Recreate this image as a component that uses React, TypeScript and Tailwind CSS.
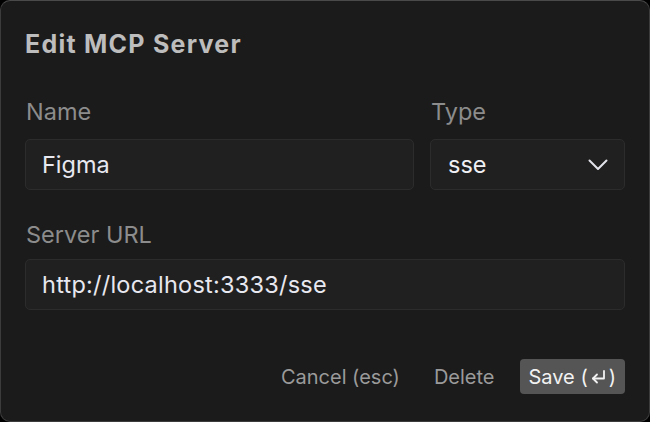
import { useState } from "react";

const Chevron = () => (
  <svg width="20" height="12" viewBox="0 0 20 12" fill="none" className="text-[#e2e2ea]">
    <path d="M1.5 1.5 L10 10 L18.5 1.5" stroke="currentColor" strokeWidth="2" strokeLinecap="round" strokeLinejoin="round" />
  </svg>
);

const ReturnKey = () => (
  <svg width="17" height="16" viewBox="0 0 17 16" fill="none" className="mx-[2px] inline-block">
    <path d="M14 2 V9.5 H3" stroke="currentColor" strokeWidth="1.8" strokeLinecap="round" strokeLinejoin="round" />
    <path d="M7 5.5 L3 9.5 L7 13.5" stroke="currentColor" strokeWidth="1.8" strokeLinecap="round" strokeLinejoin="round" />
  </svg>
);

const inputCls =
  "h-[51px] rounded-[5px] border border-[#2c2c2c] bg-[#202020] px-[16px] text-[23.5px] text-[#e8e8f0] outline-none";

const App = () => {
  const [name, setName] = useState("Figma");
  const [url, setUrl] = useState("http://localhost:3333/sse");

  return (
    <div className="h-[422px] w-[650px] bg-black font-['Inter',sans-serif]">
      <div className="flex h-full w-full flex-col rounded-[10px] border border-[#3c3c3c] border-t-[#4a4a4a] bg-[#1b1b1b] px-[24px] pt-[28px]">
        <h1 className="text-[25px] leading-[30px] font-bold tracking-[0.05em] text-[#bdbdbd]">Edit MCP Server</h1>

        <div className="mt-[39px] flex gap-4">
          <div className="flex min-w-0 flex-1 flex-col">
            <label className="pl-px text-[23.5px] leading-[28px] text-[#8c8c8c]">Name</label>
            <input value={name} onChange={(e) => setName(e.target.value)} className={`mt-[13px] w-full ${inputCls}`} />
          </div>
          <div className="flex w-[195px] shrink-0 flex-col">
            <label className="pl-px text-[23.5px] leading-[28px] text-[#8c8c8c]">Type</label>
            <div className="mt-[13px] flex h-[51px] items-center justify-between rounded-[5px] border border-[#2c2c2c] bg-[#202020] pr-[16px] pl-[17px]">
              <span className="text-[23.5px] text-[#f0f0f4]">sse</span>
              <Chevron />
            </div>
          </div>
        </div>

        <label className="mt-[31px] pl-px text-[23.5px] leading-[28px] text-[#8c8c8c]">Server URL</label>
        <input value={url} onChange={(e) => setUrl(e.target.value)} className={`mt-[10px] tracking-[0.01em] ${inputCls}`} />

        <div className="mt-[49px] flex items-center justify-end">
          <button className="text-[20px] text-[#9a9a9a]">Cancel (esc)</button>
          <button className="ml-[34px] text-[20px] text-[#9a9a9a]">Delete</button>
          <button className="ml-[25px] flex h-[35px] items-center rounded-[4px] bg-[#555555] px-[9px] text-[20px] text-[#f2f2f2]">
            Save (<ReturnKey />)
          </button>
        </div>
      </div>
    </div>
  );
};

export default App;
